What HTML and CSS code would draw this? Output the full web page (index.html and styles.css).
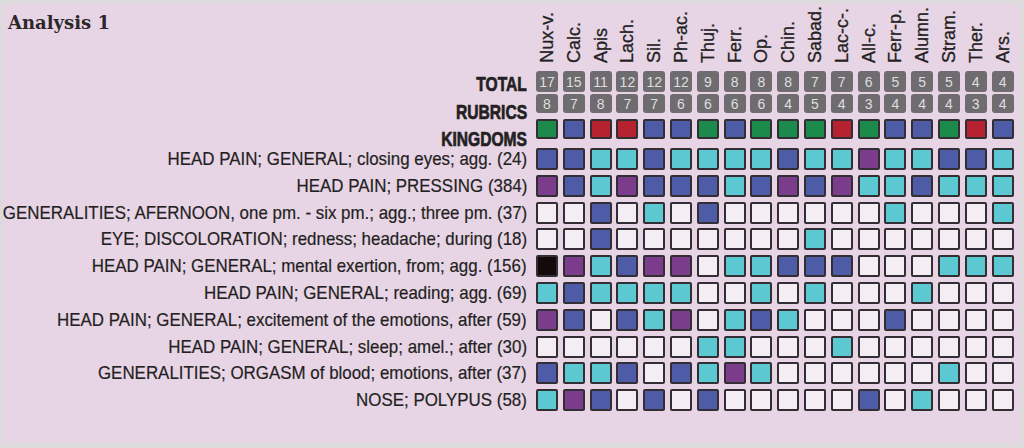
FILE: index.html
```html
<!DOCTYPE html>
<html>
<head>
<meta charset="utf-8">
<link rel="stylesheet" href="styles.css">
</head>
<body>
<div class="panel">
  <div class="grid" id="grid">
    <h1 class="title">Analysis 1</h1>
  </div>
</div>
<script src="app.js"></script>
</body>
</html>
```

FILE: styles.css
```css
body {
  margin: 0;
  background: #dddadc;
}
.panel {
  margin: 4px 4px 5px 3px;
  height: 439px;
  background: #e7d4e4;
  overflow: hidden;
}
.grid {
  display: grid;
  grid-template-columns: 533px repeat(18, 26.8px);
  grid-template-rows: 67px 23px 25px 29px repeat(11, 26.8px);
}
.title {
  margin: 0;
  padding: 8px 0 0 5px;
  font: bold 18px/22px "DejaVu Serif", serif;
  color: #2b2729;
  align-self: start;
}
.head {
  width: 22px;
  display: flex;
  justify-content: center;
  align-items: flex-end;
  padding-bottom: 8px;
  box-sizing: border-box;
}
.head span {
  writing-mode: vertical-rl;
  transform: rotate(180deg);
  font: 18px/18px "Liberation Sans", Arial, sans-serif;
  -webkit-text-stroke: 0.3px #231f22;
  color: #231f22;
  white-space: nowrap;
}
.label {
  display: flex;
  justify-content: flex-end;
  align-items: flex-start;
  padding-right: 9px;
  white-space: nowrap;
  color: #231f22;
}
.label span {
  display: inline-block;
  transform: scaleX(0.89);
  transform-origin: 100% 50%;
  font: 19px/20px "Liberation Sans", Arial, sans-serif;
  margin-top: 1px;
  -webkit-text-stroke: 0.2px #231f22;
}
.label.big span {
  font: bold 20px/15px "Liberation Sans", Arial, sans-serif;
  -webkit-text-stroke: 0.7px #231f22;
  transform: scaleX(0.78);
  margin-top: 0;
}
.label.l-total { padding-top: 6px; }
.label.l-rub { padding-top: 11px; }
.label.l-king { padding-top: 13px; }
.num {
  width: 22px;
  background: #6f6c70;
  color: #dedede;
  border-radius: 3px;
  font: 14px "Liberation Sans", Arial, sans-serif;
  display: flex;
  align-items: center;
  justify-content: center;
  align-self: start;
}
.num.total { height: 21px; }
.num.rub { height: 19px; }
.cell {
  width: 22px;
  height: 22px;
  box-sizing: border-box;
  border: 2px solid #322e33;
  border-radius: 2px;
  align-self: start;
}
.cell.king { height: 20px; }
.B { background: #4e5ca8; }
.C { background: #5cc8d2; }
.P { background: #7b3c8b; }
.W { background: #f4edf4; }
.K { background: #140a0b; }
.G { background: #1c8a4b; }
.R { background: #b6222f; }
```

FILE: app.js
```js
const rem = ["Nux-v.","Calc.","Apis","Lach.","Sil.","Ph-ac.","Thuj.","Ferr.","Op.","Chin.","Sabad.","Lac-c-.","All-c.","Ferr-p.","Alumn.","Stram.","Ther.","Ars."];
const total = [17,15,11,12,12,12,9,8,8,8,7,7,6,5,5,5,4,4];
const rub = [8,7,8,7,7,6,6,6,6,4,5,4,3,4,4,4,3,4];
const king = "GBRRBBGBGGGRGBBGRB";
const rows = [
  ["HEAD PAIN; GENERAL; closing eyes; agg. (24)", "BBCCBCCCCBCCPCCBBC"],
  ["HEAD PAIN; PRESSING (384)", "PBCPBBBCBPBPCCBCCC"],
  ["GENERALITIES; AFERNOON, one pm. - six pm.; agg.; three pm. (37)", "WWBWCWBWWWWWWCWWWC"],
  ["EYE; DISCOLORATION; redness; headache; during (18)", "WWBWWWWWWWCWWWWWWW"],
  ["HEAD PAIN; GENERAL; mental exertion, from; agg. (156)", "KPCBPPWCCBBBWWWCCC"],
  ["HEAD PAIN; GENERAL; reading; agg. (69)", "CBCCCCWWCWCWWWCWWW"],
  ["HEAD PAIN; GENERAL; excitement of the emotions, after (59)", "PBWBCPWCBCWWWBWWWW"],
  ["HEAD PAIN; GENERAL; sleep; amel.; after (30)", "WWWWWWCCWWWCWWWWWW"],
  ["GENERALITIES; ORGASM of blood; emotions, after (37)", "BCCBWBCPCWWWWWWCWW"],
  ["NOSE; POLYPUS (58)", "CPBWBWBWWWWWBWCWWW"]
];
const g = document.getElementById("grid");
function add(cls, text) {
  const d = document.createElement("div");
  d.className = cls;
  if (text !== undefined) d.textContent = text;
  g.appendChild(d);
  return d;
}
function label(cls, text) {
  const d = add("label " + cls);
  const s = document.createElement("span");
  s.textContent = text;
  d.appendChild(s);
}
rem.forEach(r => {
  const d = add("head");
  const s = document.createElement("span");
  s.textContent = r;
  d.appendChild(s);
});
label("big l-total", "TOTAL");
total.forEach(n => add("num total", n));
label("big l-rub", "RUBRICS");
rub.forEach(n => add("num rub", n));
label("big l-king", "KINGDOMS");
[...king].forEach(k => add("cell king " + k));
rows.forEach(([t, c]) => {
  label("", t);
  [...c].forEach(k => add("cell " + k));
});
```
